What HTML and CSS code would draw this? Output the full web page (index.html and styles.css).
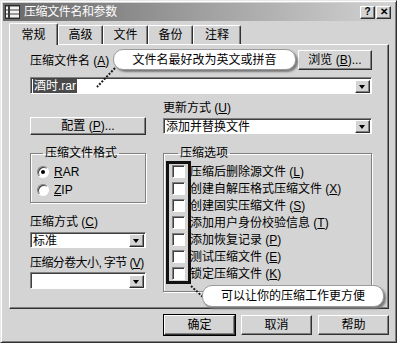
FILE: index.html
```html
<!DOCTYPE html>
<html lang="zh-CN">
<head>
  <meta charset="UTF-8">
  <title>压缩文件名和参数</title>
  <link rel="stylesheet" href="styles.css">
</head>
<body>
  <div class="dialog">
    <div class="titlebar">
      <svg class="app-icon" width="15" height="14" viewBox="0 0 15 14">
        <rect x="0.5" y="0.5" width="14" height="13" fill="#9a9a9a" stroke="#2a2a2a"/>
        <rect x="1" y="2" width="13" height="2" fill="#f2f2f2"/>
        <rect x="1" y="6" width="13" height="2" fill="#f2f2f2"/>
        <rect x="1" y="10" width="13" height="2" fill="#f2f2f2"/>
        <rect x="3" y="1" width="2" height="12" fill="#3a3a3a"/>
      </svg>
      <span class="title">压缩文件名和参数</span>
      <div class="caption-buttons">
        <span class="cap-btn">?</span>
        <span class="cap-btn">✕</span>
      </div>
    </div>

    <div class="tabs">
      <div class="tab active">常规</div>
      <div class="tab">高级</div>
      <div class="tab">文件</div>
      <div class="tab">备份</div>
      <div class="tab">注释</div>
    </div>

    <div class="panel">
      <div class="name-row">
        <span class="field-label">压缩文件名 (<u>A</u>)</span>
        <button class="btn btn-browse">浏览 (<u>B</u>)...</button>
      </div>
      <div class="combo combo-name">
        <span class="combo-text"><span class="selected">酒时.rar</span></span>
        <span class="combo-arrow"></span>
      </div>

      <div class="columns">
        <div class="col-left">
          <button class="btn btn-config">配置 (<u>P</u>)...</button>

          <fieldset class="group group-format">
            <legend>压缩文件格式</legend>
            <div class="radio-row"><span class="radio checked"></span><span><u>R</u>AR</span></div>
            <div class="radio-row"><span class="radio"></span><span><u>Z</u>IP</span></div>
          </fieldset>

          <div class="field-label label-method">压缩方式 (<u>C</u>)</div>
          <div class="combo combo-method">
            <span class="combo-text">标准</span>
            <span class="combo-arrow"></span>
          </div>

          <div class="field-label label-volume">压缩分卷大小, 字节 (<u>V</u>)</div>
          <div class="combo combo-volume">
            <span class="combo-text"></span>
            <span class="combo-arrow"></span>
          </div>
        </div>

        <div class="col-right">
          <div class="field-label">更新方式 (<u>U</u>)</div>
          <div class="combo combo-update">
            <span class="combo-text">添加并替换文件</span>
            <span class="combo-arrow"></span>
          </div>

          <fieldset class="group group-options">
            <legend>压缩选项</legend>
            <div class="options-list">
              <div class="check-row"><span class="checkbox"></span><span>压缩后删除源文件 (<u>L</u>)</span></div>
              <div class="check-row"><span class="checkbox"></span><span>创建自解压格式压缩文件 (<u>X</u>)</span></div>
              <div class="check-row"><span class="checkbox"></span><span>创建固实压缩文件 (<u>S</u>)</span></div>
              <div class="check-row"><span class="checkbox"></span><span>添加用户身份校验信息 (<u>T</u>)</span></div>
              <div class="check-row"><span class="checkbox"></span><span>添加恢复记录 (<u>P</u>)</span></div>
              <div class="check-row"><span class="checkbox"></span><span>测试压缩文件 (<u>E</u>)</span></div>
              <div class="check-row"><span class="checkbox"></span><span>锁定压缩文件 (<u>K</u>)</span></div>
              <div class="highlight"></div>
            </div>
          </fieldset>
        </div>
      </div>
    </div>

    <div class="footer">
      <button class="btn btn-footer default">确定</button>
      <button class="btn btn-footer">取消</button>
      <button class="btn btn-footer">帮助</button>
    </div>

    <!-- 注释标注 -->
    <svg class="leaders" width="400" height="345" viewBox="0 0 400 345">
      <line x1="115" y1="68" x2="97" y2="87" stroke="#1a1a1a" stroke-width="2" stroke-dasharray="2 1.5"/>
      <line x1="191" y1="286" x2="204" y2="298" stroke="#1a1a1a" stroke-width="2" stroke-dasharray="2 1.5"/>
    </svg>
    <div class="callout callout-name">文件名最好改为英文或拼音</div>
    <div class="callout callout-options">可以让你的压缩工作更方便</div>
  </div>
</body>
</html>
```

FILE: styles.css
```css
* {
  margin: 0;
  padding: 0;
  box-sizing: border-box;
}

body {
  background: #fff;
  font-family: "Liberation Sans", "Noto Sans CJK SC", sans-serif;
  font-size: 12px;
  line-height: 14px;
  color: #000;
}

u {
  text-decoration: underline;
  text-underline-offset: 1px;
}

.dialog {
  position: relative;
  width: 397px;
  height: 343px;
  padding: 2px;
  background: #d4d4d4;
  border: 1px solid;
  border-color: #e8e8e8 #303030 #303030 #e8e8e8;
  box-shadow: inset 1px 1px #fff, inset -1px -1px #808080;
}

/* 标题栏 */
.titlebar {
  height: 18px;
  display: flex;
  align-items: center;
  gap: 4px;
  padding: 0 3px 0 2px;
  background: linear-gradient(to right, #686868, #a4a4a4 55%, #d2d2d2);
  color: #fff;
}

.title {
  font-size: 12px;
  letter-spacing: -0.4px;
}

.caption-buttons {
  margin-left: auto;
  display: flex;
  gap: 1px;
}

.cap-btn {
  width: 15px;
  height: 13px;
  display: flex;
  align-items: center;
  justify-content: center;
  background: #d4d4d4;
  color: #000;
  font-size: 10px;
  font-weight: 700;
  border: 1px solid;
  border-color: #fff #303030 #303030 #fff;
  box-shadow: inset -1px -1px #808080;
}

/* 选项卡 */
.tabs {
  height: 23px;
  display: flex;
  align-items: flex-end;
  padding-left: 6px;
}

.tab {
  width: 45px;
  height: 19px;
  display: flex;
  align-items: center;
  justify-content: center;
  border: 1px solid;
  border-bottom: none;
  border-color: #fff #303030 #303030 #fff;
  border-radius: 2px 2px 0 0;
  box-shadow: inset -1px 0 #808080;
}

.tab:last-child {
  width: 48px;
}

.tab.active {
  width: 49px;
  height: 22px;
  margin-bottom: -1px;
  position: relative;
  z-index: 1;
  background: #d4d4d4;
}

.panel {
  position: relative;
  width: 380px;
  height: 265px;
  margin-left: 6px;
  padding: 5px 16px 0 20px;
  border: 1px solid;
  border-color: #fff #303030 #303030 #fff;
  box-shadow: inset -1px -1px #808080;
}

/* 按钮 */
.btn {
  height: 20px;
  display: flex;
  align-items: center;
  justify-content: center;
  font: inherit;
  color: #000;
  background: #d4d4d4;
  border: 1px solid;
  border-color: #fff #303030 #303030 #fff;
  box-shadow: inset -1px -1px #808080;
}

.btn-browse {
  width: 74px;
}

.btn-config {
  width: 116px;
  height: 18px;
  margin-top: 16px;
}

.field-label {
  white-space: nowrap;
}

.name-row {
  height: 20px;
  display: flex;
  align-items: flex-end;
  justify-content: space-between;
}

.name-row .field-label {
  padding-bottom: 2px;
}

/* 下拉框 */
.combo {
  height: 17px;
  display: flex;
  align-items: center;
  padding: 1px 1px 0 2px;
  background: #fff;
  border: 1px solid;
  border-color: #808080 #fff #fff #808080;
  box-shadow: inset 1px 1px #404040;
}

.combo-text {
  flex: 1;
  white-space: nowrap;
}

.combo-arrow {
  position: relative;
  width: 15px;
  height: 13px;
  background: #d4d4d4;
  border: 1px solid;
  border-color: #fff #303030 #303030 #fff;
  box-shadow: inset -1px -1px #808080;
}

.combo-arrow::after {
  content: '';
  position: absolute;
  left: 3px;
  top: 4px;
  border-left: 3.5px solid transparent;
  border-right: 3.5px solid transparent;
  border-top: 4px solid #000;
}

.combo-name {
  margin-top: 7px;
}

.selected {
  background: #4a4a4a;
  color: #fff;
  padding: 0 1px;
}

.columns {
  display: flex;
  gap: 17px;
  margin-top: 7px;
}

.col-left {
  width: 116px;
}

.col-right {
  width: 209px;
}

.combo-update {
  height: 16px;
  margin-top: 3px;
}

.label-method {
  margin-top: 12px;
}

.combo-method {
  height: 16px;
  margin-top: 3px;
}

.label-volume {
  margin-top: 8px;
  letter-spacing: -0.6px;
}

.combo-volume {
  margin-top: 2px;
}

/* 分组框 */
.group {
  min-width: 0;
  border: 1px solid #808080;
  box-shadow: inset 1px 1px #fff, 1px 1px 0 #fff;
}

.group legend {
  margin-left: 6px;
  padding: 0 2px;
  line-height: 14px;
}

.group-format {
  margin-top: 11px;
  padding: 3px 0 3px 6px;
}

.radio-row {
  height: 18px;
  display: flex;
  align-items: center;
  gap: 5px;
}

.radio {
  position: relative;
  width: 12px;
  height: 12px;
  border-radius: 50%;
  background: #fff;
  border: 1px solid;
  border-color: #808080 #fff #fff #808080;
  box-shadow: inset 1px 1px #404040;
}

.radio.checked::after {
  content: '';
  position: absolute;
  left: 3px;
  top: 3px;
  width: 4px;
  height: 4px;
  border-radius: 50%;
  background: #000;
}

.group-options {
  margin-top: 12px;
  padding: 3px 0 9px 8px;
}

.options-list {
  position: relative;
}

.check-row {
  height: 17px;
  display: flex;
  align-items: center;
  gap: 5px;
  white-space: nowrap;
}

.checkbox {
  width: 13px;
  height: 13px;
  flex: none;
  background: #fff;
  border: 1px solid;
  border-color: #808080 #fff #fff #808080;
  box-shadow: inset 1px 1px #404040;
}

.highlight {
  position: absolute;
  left: -6px;
  top: -2px;
  width: 25px;
  height: 123px;
  border: 3px solid #111;
}

.footer {
  display: flex;
  justify-content: flex-end;
  gap: 6px;
  margin-top: 6px;
  padding-right: 5px;
}

.btn-footer {
  width: 71px;
}

.btn-footer.default {
  outline: 1px solid #000;
}

/* 标注 */
.leaders {
  position: absolute;
  left: -1px;
  top: -1px;
  pointer-events: none;
}

.callout {
  position: absolute;
  display: flex;
  align-items: center;
  justify-content: center;
  background: #fff;
  border: 1px solid #9a9a9a;
  border-radius: 10px;
  box-shadow: 2px 2px 2px #7a7a7a;
  font-size: 12px;
}

.callout-name {
  left: 112px;
  top: 48px;
  width: 183px;
  height: 21px;
}

.callout-options {
  left: 201px;
  top: 284px;
  width: 182px;
  height: 22px;
}
```
